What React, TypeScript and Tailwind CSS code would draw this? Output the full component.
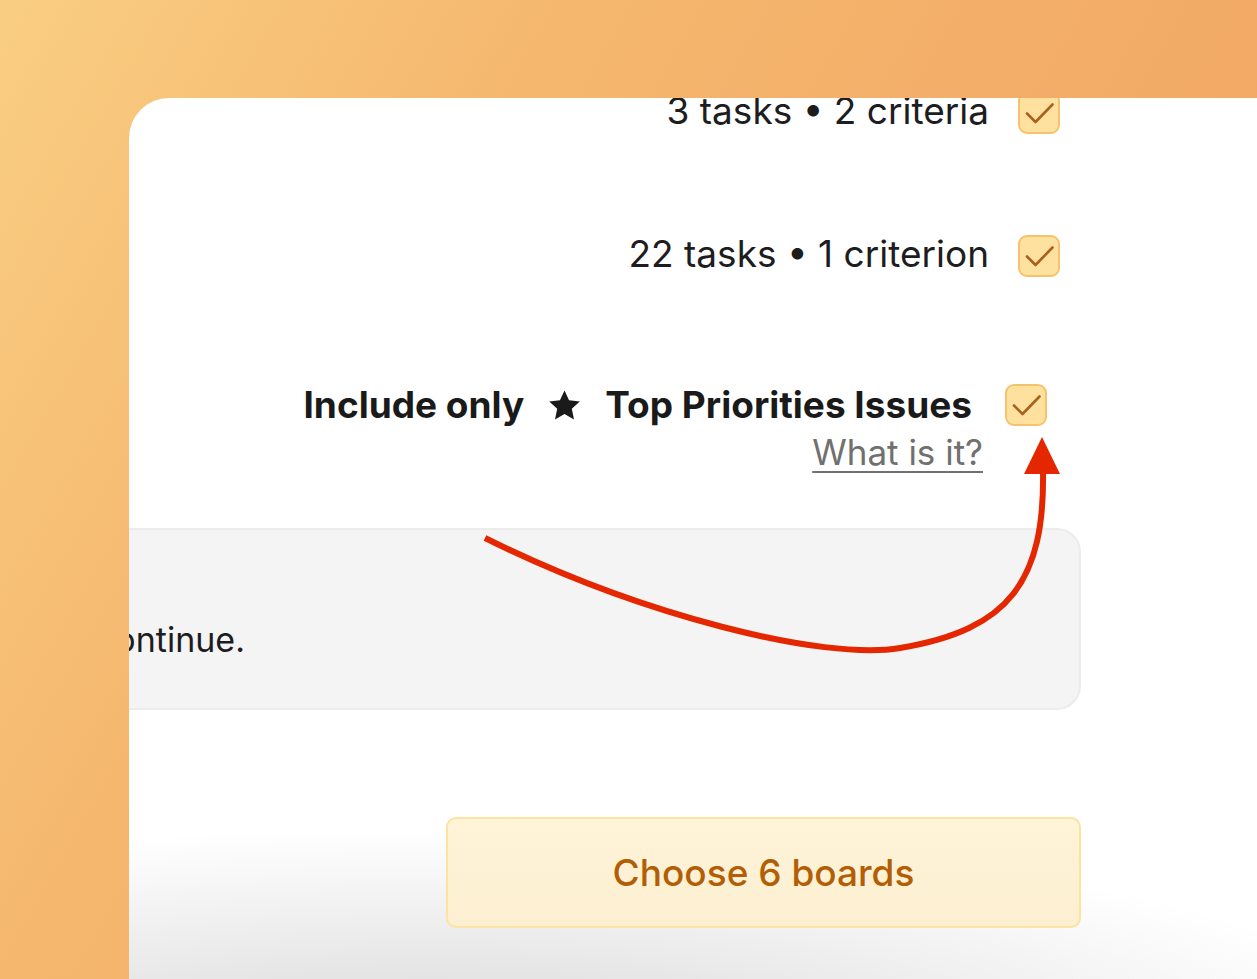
import React from 'react';

function Checkbox() {
  return (
    <div className="flex h-[42px] w-[42px] shrink-0 items-center justify-center rounded-[9px] border-2 border-[#f5c36c] bg-[#ffe19f]">
      <svg viewBox="0 0 38 38" className="h-[38px] w-[38px]">
        <path d="M7 19.5 L15.5 28 L32.5 10.5" fill="none" stroke="#a9621d" strokeWidth="2.6" strokeLinecap="round" strokeLinejoin="round" />
      </svg>
    </div>
  );
}

function CountRow({ label, className = '' }: { label: string; className?: string }) {
  return (
    <div className={`flex h-[42px] items-center gap-[29px] pr-[21px] ${className}`}>
      <span className="mb-[4px] whitespace-nowrap text-[37px] leading-[44px] text-[#1d1d1f]">{label}</span>
      <Checkbox />
    </div>
  );
}

export default function App() {
  return (
    <div className="relative h-[979px] w-full overflow-hidden bg-[linear-gradient(120deg,#f9ce83_0%,#f5b76e_31%,#f2aa66_70%,#f0a060_100%)] pl-[129px] pt-[98px] font-['Inter','Noto_Sans',sans-serif]">
      {/* card */}
      <div className="h-[881px] overflow-hidden rounded-tl-[40px] bg-white bg-[radial-gradient(ellipse_1000px_230px_at_300px_960px,#d6d6d6_0%,#ffffff_100%)]">
        <div className="-mt-[6px] flex flex-col items-end pr-[176px]">
          <CountRow label="3 tasks • 2 criteria" />
          <CountRow label="22 tasks • 1 criterion" className="mt-[101px]" />

          {/* top priorities */}
          <div className="mt-[107px] flex items-start gap-[33px] pr-[34px]">
            <div className="flex flex-col items-end">
              <div className="flex h-[42px] items-center whitespace-nowrap text-[37px] font-bold leading-[44px] text-[#1a1a1a]">
                <span>Include only</span>
                <svg viewBox="0 0 24 24" className="ml-[22px] h-[37px] w-[37px]">
                  <path d="M12 2.2l2.95 6.35 6.95.8-5.15 4.75 1.4 6.9L12 17.5 5.85 21l1.4-6.9L2.1 9.35l6.95-.8z" fill="#1a1a1a" />
                </svg>
                <span className="ml-[22px]">Top Priorities Issues</span>
              </div>
              <a className="-mr-[11px] mt-[5px] cursor-pointer whitespace-nowrap text-[35px] leading-[42px] text-[#707070] underline decoration-[#707070] decoration-2 underline-offset-[6px]">
                What is it?
              </a>
            </div>
            <Checkbox />
          </div>

          {/* hint box */}
          <div className="mt-[55px] h-[182px] w-[1400px] shrink-0 rounded-[24px] border-2 border-[#ececec] bg-[#f4f4f4] pt-[89px]">
            <div className="w-[562px] whitespace-nowrap text-right text-[34px] leading-[42px] text-[#1d1d1f]">
              Select boards to continue.
            </div>
          </div>

          <button className="mt-[107px] flex h-[111px] w-[635px] items-center justify-center rounded-[10px] border-2 border-[#fde3a2] bg-gradient-to-b from-[#fff4d8] to-[#fcefd2] text-[37px] font-medium leading-[44px] text-[#b35e05]">
            Choose 6 boards
          </button>
        </div>
      </div>

      {/* annotation arrow */}
      <svg className="pointer-events-none absolute left-0 top-0" width="1257" height="979" viewBox="0 0 1257 979">
        <path
          d="M485 538 C640 615 823 661 900 648 C1010 630 1045 580 1043 470"
          fill="none"
          stroke="#e42700"
          strokeWidth="6"
        />
        <path d="M1042 437 L1060 474 L1024 474 Z" fill="#e42700" />
      </svg>
    </div>
  );
}
